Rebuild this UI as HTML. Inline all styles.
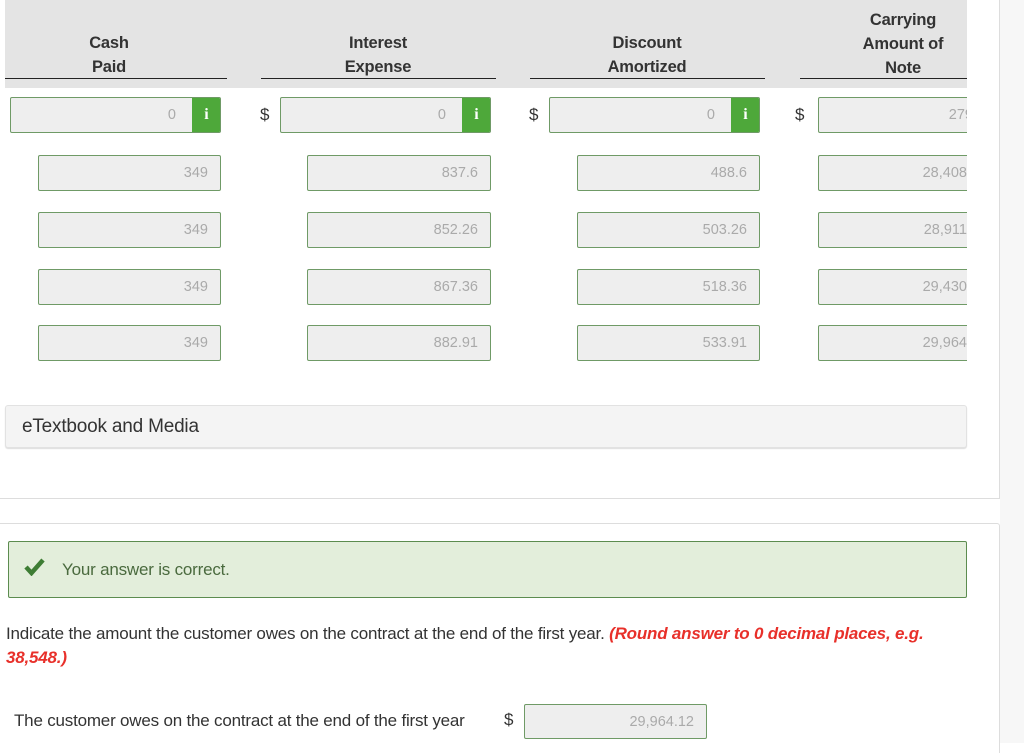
<!DOCTYPE html>
<html><head><style>
*{margin:0;padding:0;box-sizing:border-box}
body{width:1024px;height:743px;background:#fff;font-family:"Liberation Sans",sans-serif;color:#333;position:relative;overflow:hidden}
.a{position:absolute}
.hd{left:5px;top:0;width:962px;height:88px;background:#e4e4e4}
.ul{height:1px;background:#222;top:78px}
.h{font-weight:bold;font-size:16.5px;color:#333;text-align:center;line-height:24px;letter-spacing:-0.2px}
.in{background:#eee;border:1px solid #6f9a66;border-radius:2px;height:36px;font-size:14.5px;color:#aaa;text-align:right;line-height:34px;padding-right:12px;overflow:hidden;white-space:nowrap}
.ic{position:absolute;right:-1px;top:-1px;width:29px;height:36px;background:#4ea83a;color:#fff;font-weight:bold;font-family:"Liberation Serif",serif;font-size:16px;text-align:center;line-height:36px;border-radius:0 2px 2px 0}
.in.i{padding-right:44px}
.d{font-size:17px;color:#333}
</style></head><body>
<div class="a hd"></div>
<div class="a ul" style="left:5px;width:222px"></div>
<div class="a ul" style="left:261px;width:235px"></div>
<div class="a ul" style="left:530px;width:235px"></div>
<div class="a ul" style="left:800px;width:167px"></div>
<div class="a h" style="left:49px;width:120px;top:31px">Cash<br>Paid</div>
<div class="a h" style="left:318px;width:120px;top:31px">Interest<br>Expense</div>
<div class="a h" style="left:587px;width:120px;top:31px">Discount<br>Amortized</div>
<div class="a h" style="left:843px;width:120px;top:8px">Carrying<br>Amount of<br>Note</div>
<div class="a" style="left:967px;top:0;width:32px;height:498px;background:#fff"></div>
<div class="a" style="left:999px;top:0;width:1px;height:498px;background:#ddd"></div>
<div class="a" style="left:0;top:498px;width:1000px;height:1px;background:#ddd"></div>
<div class="a" style="left:1000px;top:0;width:24px;height:743px;background:#f7f7f7"></div>

<div class="a in i" style="left:10px;top:97px;width:211px">0<span class="ic">i</span></div>
<div class="a d" style="left:260px;top:105px">$</div>
<div class="a in i" style="left:280px;top:97px;width:211px">0<span class="ic">i</span></div>
<div class="a d" style="left:529px;top:105px">$</div>
<div class="a in i" style="left:549px;top:97px;width:211px">0<span class="ic">i</span></div>
<div class="a d" style="left:795px;top:105px">$</div>
<div class="a in" style="left:818px;top:97px;width:160px;padding-right:4px">279</div>

<div class="a in" style="left:38px;top:155px;width:183px">349</div>
<div class="a in" style="left:307px;top:155px;width:184px">837.6</div>
<div class="a in" style="left:577px;top:155px;width:183px">488.6</div>
<div class="a in" style="left:818px;top:155px;width:160px;padding-right:6px">28,408.</div>
<div class="a in" style="left:38px;top:212px;width:183px">349</div>
<div class="a in" style="left:307px;top:212px;width:184px">852.26</div>
<div class="a in" style="left:577px;top:212px;width:183px">503.26</div>
<div class="a in" style="left:818px;top:212px;width:160px;padding-right:6px">28,911.</div>
<div class="a in" style="left:38px;top:269px;width:183px">349</div>
<div class="a in" style="left:307px;top:269px;width:184px">867.36</div>
<div class="a in" style="left:577px;top:269px;width:183px">518.36</div>
<div class="a in" style="left:818px;top:269px;width:160px;padding-right:6px">29,430.</div>
<div class="a in" style="left:38px;top:325px;width:183px">349</div>
<div class="a in" style="left:307px;top:325px;width:184px">882.91</div>
<div class="a in" style="left:577px;top:325px;width:183px">533.91</div>
<div class="a in" style="left:818px;top:325px;width:160px;padding-right:6px">29,964.</div>
<div class="a" style="left:967px;top:90px;width:32px;height:280px;background:#fff"></div>

<div class="a" style="left:5px;top:405px;width:962px;height:43px;background:#f4f4f4;border:1px solid #e2e2e2;border-radius:3px;box-shadow:0 1px 1px #ddd;font-size:19px;line-height:41px;padding-left:16px;letter-spacing:-0.2px">eTextbook and Media</div>

<div class="a" style="left:0;top:523px;width:1000px;height:230px;border-top:1px solid #ddd;border-right:1px solid #ddd;border-radius:0 3px 0 0"></div>
<div class="a" style="left:8px;top:541px;width:959px;height:57px;background:#e3eedb;border:1px solid #5c8c4f;border-radius:2px"></div>
<svg class="a" style="left:24px;top:558px" width="21" height="18" viewBox="0 0 21 18"><path d="M2 9 L7.5 15 L19 2" fill="none" stroke="#3e7d34" stroke-width="4.5"/></svg>
<div class="a" style="left:62px;top:560px;font-size:17px;color:#4a6a3e;letter-spacing:-0.2px">Your answer is correct.</div>
<div class="a" style="left:6px;top:622px;width:940px;font-size:17px;line-height:24px;letter-spacing:-0.2px;color:#333">Indicate the amount the customer owes on the contract at the end of the first year. <b style="color:#e8302a;font-style:italic">(Round answer to 0 decimal places, e.g. 38,548.)</b></div>
<div class="a" style="left:14px;top:711px;font-size:17px;letter-spacing:-0.2px">The customer owes on the contract at the end of the first year</div>
<div class="a d" style="left:504px;top:710px">$</div>
<div class="a in" style="left:524px;top:704px;width:183px;height:35px;padding-right:12px">29,964.12</div>
</body></html>
